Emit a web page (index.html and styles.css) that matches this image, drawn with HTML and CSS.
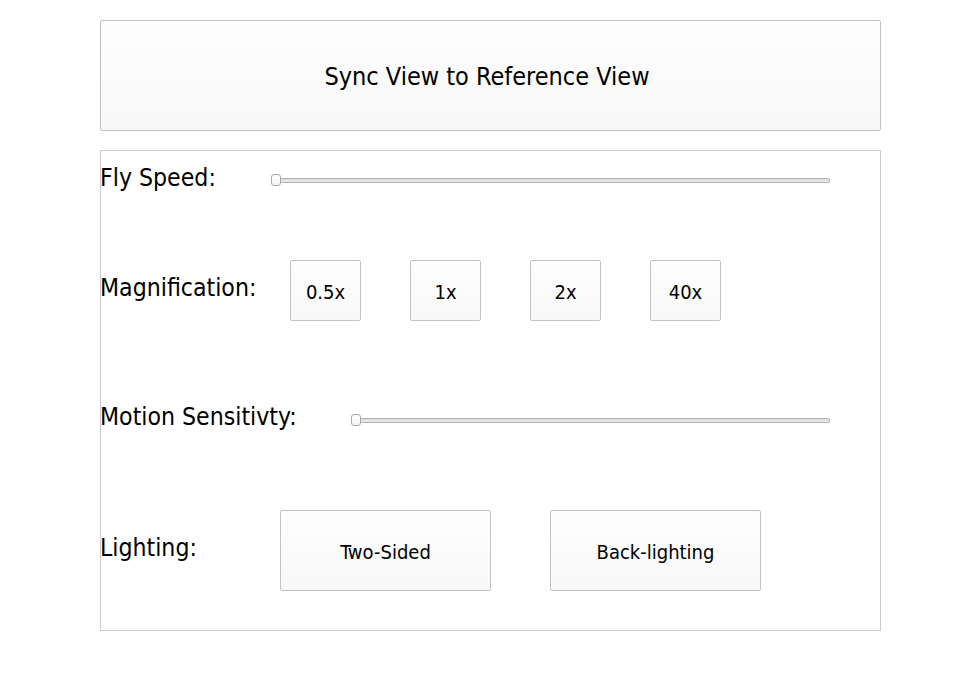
FILE: index.html
```html
<!DOCTYPE html>
<html>
<head>
<meta charset="utf-8">
<link rel="stylesheet" href="styles.css">
</head>
<body>
<div class="page">
  <button class="sync-btn">Sync View to Reference View</button>
  <div class="panel">
    <div class="row row-fly">
      <div class="label label-fly">Fly Speed:</div>
      <div class="slider"><div class="thumb"></div><div class="track"></div></div>
    </div>
    <div class="row row-mag">
      <div class="label label-mag">Magnification:</div>
      <div class="btn-group btn-group-mag">
        <button class="opt-btn mag-btn">0.5x</button>
        <button class="opt-btn mag-btn">1x</button>
        <button class="opt-btn mag-btn">2x</button>
        <button class="opt-btn mag-btn">40x</button>
      </div>
    </div>
    <div class="row row-motion">
      <div class="label label-motion">Motion Sensitivty:</div>
      <div class="slider"><div class="thumb"></div><div class="track"></div></div>
    </div>
    <div class="row row-light">
      <div class="label label-light">Lighting:</div>
      <div class="btn-group btn-group-light">
        <button class="opt-btn light-btn">Two-Sided</button>
        <button class="opt-btn light-btn">Back-lighting</button>
      </div>
    </div>
  </div>
</div>
</body>
</html>
```
FILE: styles.css
```css
* { box-sizing: border-box; }
html, body { margin: 0; padding: 0; background: #ffffff; }
body {
  font-family: "DejaVu Sans Condensed", "DejaVu Sans", sans-serif;
  font-stretch: condensed;
  color: #000;
}
.page {
  margin: 20px 0 0 100px;
  width: 781px;
}
.sync-btn {
  display: block;
  width: 781px;
  height: 111px;
  margin: 0;
  padding: 2px 7px 0 0;
  border: 1px solid #c2c2c2;
  border-radius: 2px;
  background: linear-gradient(#fefefe, #f8f8f8);
  font-family: inherit;
  font-stretch: condensed;
  font-size: 25px;
  color: #000;
}
.panel {
  margin-top: 19px;
  height: 481px;
  border: 1px solid #cdcdcd;
}
.row {
  display: flex;
  align-items: flex-start;
  margin-left: -1px;
}
.label {
  font-size: 24.6px;
  line-height: 30px;
  white-space: nowrap;
  flex: none;
}
.row-fly { height: 95px; }
.row-mag { height: 144px; }
.row-motion { height: 110px; }
.row-light { height: 130px; }

.label-fly { width: 171px; margin-top: 12px; }
.label-mag { width: 190px; margin-top: 27px; }
.label-motion { width: 251px; margin-top: 12px; }
.label-light { width: 180px; margin-top: 33px; }

.slider {
  flex: 1;
  display: flex;
  align-items: center;
  margin-right: 50px;
  height: 12px;
}
.row-fly .slider { margin-top: 23px; }
.row-motion .slider { margin-top: 24px; }
.thumb {
  width: 10px;
  height: 12px;
  border: 1px solid #a9a9a9;
  border-radius: 3px;
  background: linear-gradient(#ffffff, #f2f2f2);
  flex: none;
}
.track {
  flex: 1;
  height: 5px;
  border: 1px solid #b3b3b3;
  border-left: none;
  border-radius: 0 2px 2px 0;
  background: linear-gradient(#dcdcdc, #ececec);
}
.btn-group { display: flex; }
.btn-group-mag { gap: 49px; margin-top: 14px; }
.btn-group-light { gap: 59px; margin-top: 10px; }
.opt-btn {
  margin: 0;
  padding: 2px 0 0 0;
  border: 1px solid #c2c2c2;
  border-radius: 2px;
  background: linear-gradient(#fefefe, #f8f8f8);
  font-family: inherit;
  font-stretch: condensed;
  font-size: 20px;
  color: #000;
}
.mag-btn { width: 71px; height: 61px; }
.light-btn { width: 211px; height: 81px; }
```
